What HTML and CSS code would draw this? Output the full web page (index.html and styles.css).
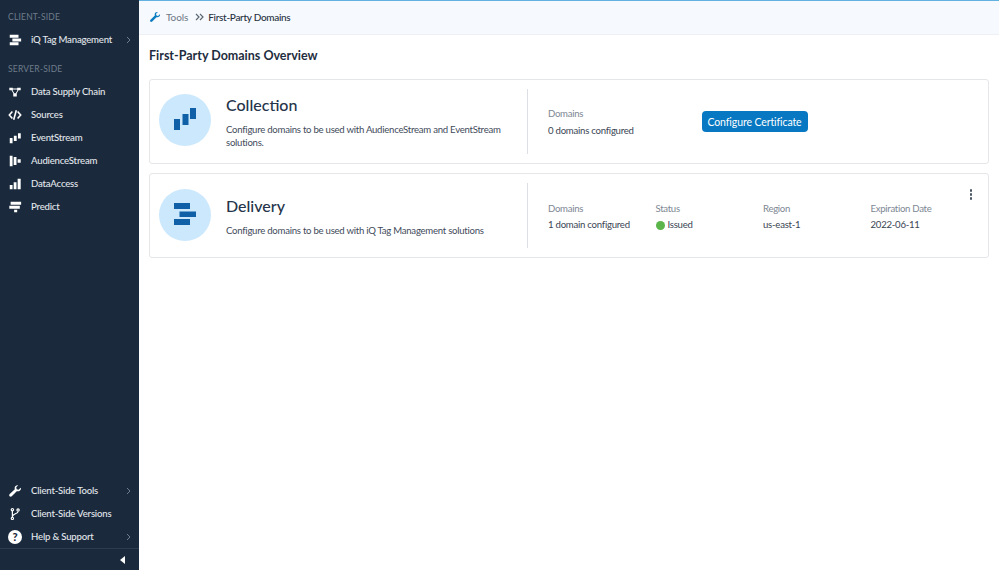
FILE: index.html
```html
<!DOCTYPE html>
<html lang="en">
<head>
<meta charset="UTF-8">
<meta name="viewport" content="width=device-width, initial-scale=1.0">
<title>First-Party Domains</title>
<link rel="stylesheet" href="styles.css">
</head>
<body>
<div class="app">
    <nav class="sidebar">
        <div class="nav-top">
            <div class="nav-title">CLIENT-SIDE</div>
            <a class="nav-item">
                <svg class="nav-icon" viewBox="0 0 16 16"><path d="M2 2h10v3.500H2zM5 6.300h10v3.500H5zM2 10.600h10v3.500H2z"/></svg>
                <span>iQ Tag Management</span>
                <svg class="chevron" viewBox="0 0 6 8"><path d="M2 1l3 3-3 3" /></svg>
            </a>
            <div class="nav-title second">SERVER-SIDE</div>
            <a class="nav-item">
                <svg class="nav-icon" viewBox="0 0 16 16"><path d="M1.500 3h4v3h-4zM10.500 3h4v3h-4zM6 9.500h4v3.500H6zM5 4h6v1H5zM4 6h1.200l2 3.500H6zM10.800 6H12l-2 3.500H8.800z"/></svg>
                <span>Data Supply Chain</span>
            </a>
            <a class="nav-item">
                <svg class="nav-icon code" viewBox="0 0 16 16"><path d="M5 4L1.500 8 5 12M11 4l3.500 4-3.500 4M9.500 2.500l-3 11"/></svg>
                <span>Sources</span>
            </a>
            <a class="nav-item">
                <svg class="nav-icon" viewBox="0 0 16 16"><path d="M2 8h3.200v6H2zM6.700 5.500h3.200v6H6.700zM11.400 2.500h3.200v6h-3.200z"/></svg>
                <span>EventStream</span>
            </a>
            <a class="nav-item">
                <svg class="nav-icon" viewBox="0 0 16 16"><path d="M2 2h3.200v12H2zM6.500 3.500h3.200v9H6.500zM11 6h3.500v4H11z"/></svg>
                <span>AudienceStream</span>
            </a>
            <a class="nav-item">
                <svg class="nav-icon" viewBox="0 0 16 16"><path d="M2 9h3.200v5H2zM6.500 6h3.200v8H6.500zM11 2h3.500v12H11z"/></svg>
                <span>DataAccess</span>
            </a>
            <a class="nav-item">
                <svg class="nav-icon" viewBox="0 0 16 16"><path d="M3 2h12v3.500H3zM1.500 6.500h12V10h-12zM7 11h3.500v3H7z"/></svg>
                <span>Predict</span>
            </a>
        </div>
        <div class="nav-bottom">
            <a class="nav-item">
                <svg class="nav-icon" viewBox="0 0 16 16"><path d="M14.500 4.300l-2.400 2.200-2.200-.5-.5-2.200L11.700 1.500C9.800 1 7.800 2.300 7.600 4.300c0 .6 0 1.100.2 1.600L2 11.500c-.8.800-.8 1.800-.2 2.500.7.700 1.800.7 2.500 0l5.700-5.800c2.400.8 4.800-.9 4.800-3.200 0-.3-.1-.5-.3-.7z"/></svg>
                <span>Client-Side Tools</span>
                <svg class="chevron" viewBox="0 0 6 8"><path d="M2 1l3 3-3 3" /></svg>
            </a>
            <a class="nav-item">
                <svg class="nav-icon branch" viewBox="0 0 16 16"><circle cx="5" cy="3" r="1.300"/><circle cx="5" cy="13" r="1.300"/><circle cx="11.500" cy="3.500" r="1.300"/><path d="M5 4v8M11.500 5c0 3-6.500 2.500-6.500 6"/></svg>
                <span>Client-Side Versions</span>
            </a>
            <a class="nav-item">
                <span class="help-icon">?</span>
                <span>Help &amp; Support</span>
                <svg class="chevron" viewBox="0 0 6 8"><path d="M2 1l3 3-3 3" /></svg>
            </a>
            <div class="collapse-bar"><span class="collapse-arrow"></span></div>
        </div>
    </nav>

    <div class="main">
        <div class="breadcrumb">
            <svg class="crumb-icon" viewBox="0 0 16 16"><path d="M14.500 4.300l-2.400 2.200-2.200-.5-.5-2.200L11.700 1.500C9.800 1 7.800 2.300 7.600 4.300c0 .6 0 1.100.2 1.600L2 11.500c-.8.800-.8 1.800-.2 2.500.7.700 1.800.7 2.500 0l5.700-5.800c2.400.8 4.800-.9 4.800-3.200 0-.3-.1-.5-.3-.7z"/></svg>
            <span class="crumb-link">Tools</span>
            <svg class="crumb-sep" viewBox="0 0 10 8"><path d="M1 1l3 3-3 3M5 1l3 3-3 3"/></svg>
            <span class="crumb-current">First-Party Domains</span>
        </div>

        <div class="content">
            <h1>First-Party Domains Overview</h1>

            <div class="card">
                <div class="card-left">
                    <div class="circle">
                        <svg viewBox="0 0 52 52"><path d="M15 25h6v11h-6zM23.500 20h6v11h-6zM31 14h6v11h-6z"/></svg>
                    </div>
                    <div class="card-text">
                        <h2>Collection</h2>
                        <p>Configure domains to be used with AudienceStream and EventStream solutions.</p>
                    </div>
                </div>
                <div class="card-right">
                    <div class="field">
                        <div class="label">Domains</div>
                        <div class="value">0 domains configured</div>
                    </div>
                    <button class="btn">Configure Certificate</button>
                </div>
            </div>

            <div class="card card-delivery">
                <div class="card-left">
                    <div class="circle">
                        <svg viewBox="0 0 52 52"><path d="M15 14h16v6H15zM20.500 22.500H37v5.500H20.500zM15 30h16v6H15z"/></svg>
                    </div>
                    <div class="card-text">
                        <h2>Delivery</h2>
                        <p>Configure domains to be used with iQ Tag Management solutions</p>
                    </div>
                </div>
                <div class="card-right">
                    <div class="field">
                        <div class="label">Domains</div>
                        <div class="value">1 domain configured</div>
                    </div>
                    <div class="field">
                        <div class="label">Status</div>
                        <div class="value"><span class="dot"></span>Issued</div>
                    </div>
                    <div class="field">
                        <div class="label">Region</div>
                        <div class="value">us-east-1</div>
                    </div>
                    <div class="field">
                        <div class="label">Expiration Date</div>
                        <div class="value">2022-06-11</div>
                    </div>
                </div>
                <div class="kebab"><i></i><i></i><i></i></div>
            </div>
        </div>
    </div>
</div>
</body>
</html>
```

FILE: styles.css
```css
* {
    box-sizing: border-box;
}

body {
    font-family: Lato, "Open Sans", sans-serif;
    margin: 0;
    padding: 0;
    background-color: #fff;
    color: #2b3a4d;
}

.app {
    display: flex;
    height: 570px;
    overflow: hidden;
}

/* sidebar */
.sidebar {
    width: 139px;
    flex-shrink: 0;
    background-color: #1a2a3c;
    color: #e3e7ec;
    display: flex;
    flex-direction: column;
    justify-content: space-between;
    padding-top: 11px;
}

.nav-title {
    font-size: 8.500px;
    line-height: 12px;
    color: #6f7c8b;
    padding-left: 8px;
    margin-bottom: 5px;
    letter-spacing: 0.2px;
}

.nav-title.second {
    margin-top: 12px;
}

.nav-item {
    display: flex;
    align-items: center;
    height: 23px;
    font-size: 9.600px;
    font-weight: 500;
    letter-spacing: -0.2px;
    position: relative;
}

.nav-icon {
    width: 14px;
    height: 14px;
    margin: 0 9px 0 8px;
    fill: #fff;
    flex-shrink: 0;
}

.nav-icon.code {
    fill: none;
    stroke: #fff;
    stroke-width: 1.8;
}

.nav-icon.branch {
    stroke: #fff;
    stroke-width: 1.400;
    fill: none;
}

.help-icon {
    width: 14px;
    height: 14px;
    margin: 0 9px 0 8px;
    border-radius: 50%;
    background-color: #fff;
    color: #1a2a3c;
    font-size: 11px;
    font-weight: 900;
    line-height: 14px;
    text-align: center;
    flex-shrink: 0;
    letter-spacing: 0;
}

.chevron {
    position: absolute;
    right: 8px;
    top: 8px;
    width: 6px;
    height: 8px;
    fill: none;
    stroke: #6f7c8b;
    stroke-width: 1;
}

.collapse-bar {
    height: 22px;
    border-top: 1px solid #2c3b4d;
    display: flex;
    align-items: center;
    justify-content: flex-end;
    padding-right: 14px;
}

.collapse-arrow {
    width: 0;
    height: 0;
    border-top: 4px solid transparent;
    border-bottom: 4px solid transparent;
    border-right: 5px solid #fff;
}

/* main area */
.main {
    flex: 1;
    border-top: 1px solid #62b1e0;
}

.breadcrumb {
    height: 34px;
    background-color: #f6f9fd;
    border-bottom: 1px solid #edf0f4;
    display: flex;
    align-items: center;
    padding: 0 0 1px 10px;
    font-size: 10px;
    letter-spacing: -0.1px;
}

.crumb-icon {
    width: 12px;
    height: 12px;
    fill: #0c7cc0;
    margin-right: 5px;
}

.crumb-link {
    color: #6c7784;
}

.crumb-sep {
    width: 10px;
    height: 8px;
    margin: 0 3px 0 7px;
    fill: none;
    stroke: #5d6875;
    stroke-width: 1.2;
}

.crumb-current {
    color: #27313d;
    font-weight: 500;
    letter-spacing: -0.3px;
}

.content {
    padding: 11px 10px 0;
}

h1 {
    font-size: 12.500px;
    line-height: 18px;
    font-weight: 700;
    color: #1f2d40;
    margin: 0;
    padding: 1px 0 14px;
}

.card {
    height: 85px;
    background-color: #fff;
    border: 1px solid #e4e6e9;
    border-radius: 3px;
    margin-bottom: 9px;
    padding: 9px 0 9px 9px;
    display: flex;
    position: relative;
}

.card-left {
    width: 369px;
    display: flex;
    align-items: flex-start;
    flex-shrink: 0;
    border-right: 1px solid #dcdfe3;
}

.circle {
    width: 52px;
    height: 52px;
    border-radius: 50%;
    background-color: #cce8fd;
    flex-shrink: 0;
    margin: 5px 15px 0 0;
}

.circle svg {
    display: block;
    width: 52px;
    height: 52px;
    fill: #0f60a6;
}

.card-text {
    align-self: center;
}

.card-text h2 {
    font-size: 16px;
    line-height: 20px;
    font-weight: 500;
    color: #25344a;
    margin: 0 0 8px;
}

.card-text p {
    font-size: 9.600px;
    letter-spacing: -0.26px;
    line-height: 13px;
    color: #3f4b5b;
    margin: 0;
    width: 285px;
}

.card-right {
    display: flex;
    align-items: center;
    padding: 2px 0 0 20px;
}

.card-delivery .card-text {
    padding-top: 2px;
}

.card-delivery .card-right {
    padding-top: 3px;
}

.card-delivery .label {
    margin-bottom: 4px;
}

.card-delivery .circle {
    margin-top: 6px;
}

.field {
    width: 107.500px;
}

.label {
    font-size: 9.600px;
    letter-spacing: -0.3px;
    line-height: 12px;
    color: #7d8793;
    margin-bottom: 5px;
}

.value {
    font-size: 9.600px;
    letter-spacing: -0.25px;
    line-height: 12px;
    color: #3a4553;
    display: flex;
    align-items: center;
}

.dot {
    width: 9px;
    height: 9px;
    border-radius: 50%;
    background-color: #5cb54b;
    margin-right: 3px;
}

.btn {
    background-color: #0778c1;
    color: #fff;
    border: none;
    border-radius: 4px;
    height: 21px;
    width: 106px;
    padding: 0;
    margin: -2px 0 0 46px;
    font-family: inherit;
    font-size: 10.500px;
    letter-spacing: -0.1px;
    cursor: pointer;
}

.kebab {
    position: absolute;
    top: 15px;
    right: 16px;
    display: flex;
    flex-direction: column;
    gap: 1.500px;
}

.kebab i {
    display: block;
    width: 2.500px;
    height: 2.500px;
    border-radius: 50%;
    background-color: #4a5563;
}
```
